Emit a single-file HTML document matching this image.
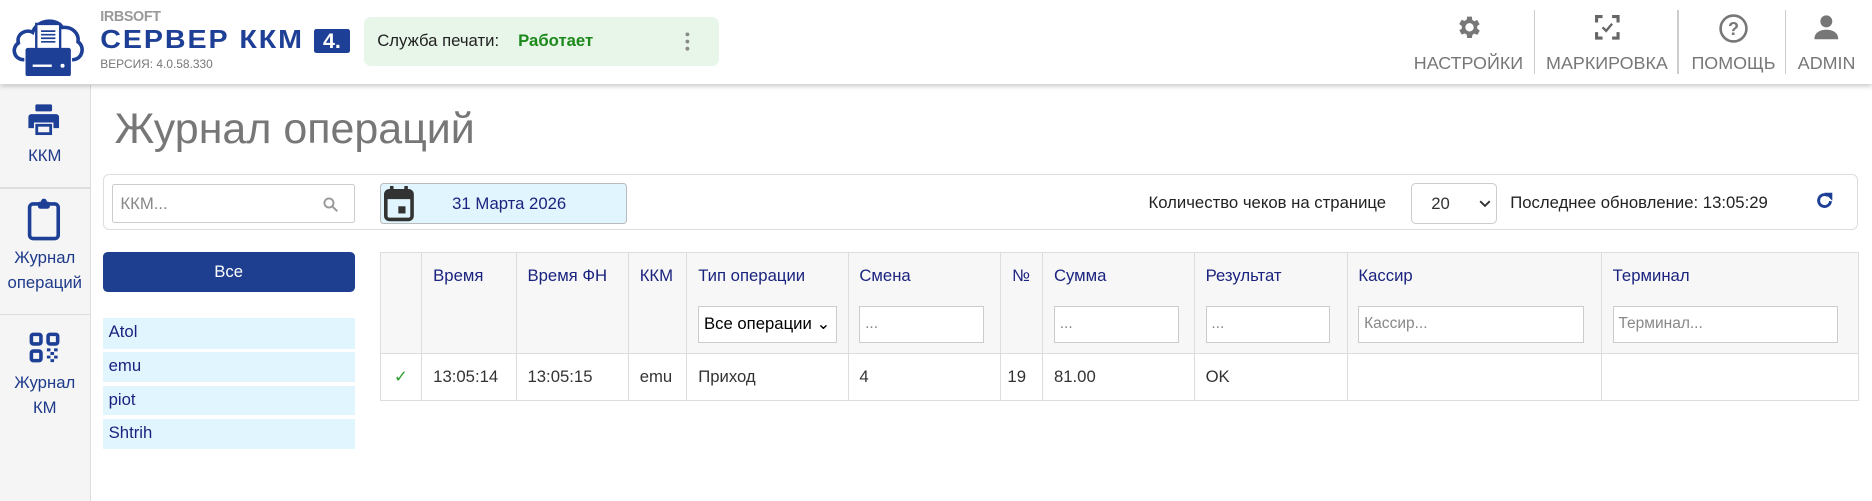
<!DOCTYPE html>
<html><head><meta charset="utf-8"><style>
html{zoom:1.19388}
body{margin:0;width:1568px;height:420px;overflow:hidden;background:#fff;font-family:"Liberation Sans",Arial,sans-serif;position:relative;color:#222}
.a{position:absolute}
.hdr{left:0;top:0;width:1568px;height:70px;background:#fff;box-shadow:0 2px 4px rgba(0,0,0,.22);z-index:2}
.nav{top:8px;height:56px;text-align:center;color:#777;font-size:15px}
.nav svg{margin-top:3px}
.nav .t{position:absolute;bottom:2px;left:0;right:0}
.sep{top:8px;width:1px;height:54px;background:#ccc}
.side{left:0;top:71px;width:75px;height:349px;background:#f5f5f5;border-right:1px solid #ddd}
.si{color:#1e3a8a;font-size:14px;text-align:center;width:75px;left:0;line-height:21px}
.hl{left:0;width:75px;height:1px;background:#ddd}
.inp{background:#fff;border:1px solid #ccc;border-radius:2px;box-sizing:border-box;font-size:13px;color:#888;padding-left:6px;line-height:29px}
.li{left:86px;width:211px;height:25px;background:#e1f5fe;color:#1a237e;font-size:14px;line-height:24px;padding-left:5px;box-sizing:border-box}
table{border-collapse:collapse;position:absolute;left:318px;top:211px;width:1239px;font-size:14px}
td,th{border:1px solid #ddd;padding:0 9px;text-align:left;font-weight:normal;vertical-align:top}
th{background:#f7f7f7;color:#1a237e;height:85px;padding-top:11px;box-sizing:border-box}
th .f{margin-top:17px;height:31px;background:#fff;border:1px solid #ccc;box-sizing:border-box;color:#888;font-size:13px;line-height:29px;padding-left:4px}
td{height:38px;line-height:38px;color:#333}
</style></head><body>
<div class="a hdr">
 <svg class="a" style="left:8px;top:10px" width="64" height="54" viewBox="0 0 64 54">
  <path d="M12 40 C3 40 1 30 7 26 C5 18 14 14 19 17 C22 7 38 4 44 13 C52 12 58 18 57 25 C63 29 61 40 52 40" fill="none" stroke="#1e3f96" stroke-width="3"/>
  <rect x="22" y="10" width="20" height="22" fill="#fff" stroke="#1e3f96" stroke-width="2"/>
  <path d="M26 16h12M26 19h12M26 22h12M26 25h12" stroke="#1e3f96" stroke-width="1.4"/>
  <rect x="13" y="30" width="38" height="24" rx="2" fill="#1e3f96"/>
  <rect x="19" y="44" width="16" height="2" fill="#fff"/><circle cx="44" cy="45" r="1.7" fill="#fff"/>
 </svg>
 <div class="a" style="left:84px;top:8px;font-size:12px;font-weight:bold;color:#999;letter-spacing:-.3px;line-height:12px">IRBSOFT</div>
 <div class="a" style="left:84px;top:20px;font-size:24px;font-weight:bold;color:#1e3f96;letter-spacing:1.6px;line-height:28px;transform:scaleY(.9);transform-origin:0 50%">СЕРВЕР ККМ</div>
 <div class="a" style="left:263px;top:24px;width:30px;height:20px;background:#1e3f96;color:#fff;font-weight:bold;font-size:18px;line-height:21px;text-align:center;border-radius:2px">4.</div>
 <div class="a" style="left:84px;top:48px;font-size:10px;color:#777">ВЕРСИЯ: 4.0.58.330</div>
 <div class="a" style="left:305px;top:14px;width:297px;height:41px;background:#e8f5e9;border-radius:6px;font-size:14px;line-height:41px">
  <span class="a" style="left:11px">Служба печати:</span>
  <span class="a" style="left:129px;color:#1b8a1b;font-weight:bold">Работает</span>
  <svg class="a" style="left:269px;top:13px" width="4" height="16" viewBox="0 0 4 16"><circle cx="2" cy="2" r="1.6" fill="#888"/><circle cx="2" cy="8" r="1.6" fill="#888"/><circle cx="2" cy="14" r="1.6" fill="#888"/></svg>
 </div>
 <div class="a nav" style="left:1180px;width:100px"><svg width="24" height="24" viewBox="0 0 24 24"><path fill="#777" d="M19.4 13a7.5 7.5 0 0 0 0-2l2.1-1.6-2-3.5-2.5 1a7 7 0 0 0-1.700-1L15 3h-4l-.4 2.7a7 7 0 0 0-1.7 1l-2.5-1-2 3.5L6.6 11a7.5 7.5 0 0 0 0 2l-2.1 1.6 2 3.5 2.5-1a7 7 0 0 0 1.7 1L11 21h4l.4-2.7a7 7 0 0 0 1.7-1l2.5 1 2-3.5zM13 15.5a3.5 3.5 0 1 1 0-7 3.5 3.5 0 0 1 0 7z"/></svg><div class="t">НАСТРОЙКИ</div></div>
 <div class="a sep" style="left:1285px"></div>
 <div class="a nav" style="left:1291px;width:110px"><svg width="24" height="24" viewBox="0 0 24 24" fill="none" stroke="#666" stroke-width="2.6"><path d="M3 8V3h5M16 3h5v5M21 16v5h-5M8 21H3v-5"/><path d="M8 12l3 3 5-6" stroke-width="2"/></svg><div class="t">МАРКИРОВКА</div></div>
 <div class="a sep" style="left:1405px"></div>
 <div class="a nav" style="left:1410px;width:84px"><svg width="26" height="26" viewBox="0 0 24 24"><circle cx="12" cy="12" r="10" fill="none" stroke="#777" stroke-width="2"/><text x="12" y="17" text-anchor="middle" font-size="14" font-weight="bold" fill="#777" font-family="Liberation Sans">?</text></svg><div class="t">ПОМОЩЬ</div></div>
 <div class="a sep" style="left:1495px"></div>
 <div class="a nav" style="left:1500px;width:60px"><svg width="24" height="24" viewBox="0 0 24 24"><circle cx="12" cy="7" r="5" fill="#777"/><path d="M2 22c0-6 5-8 10-8s10 2 10 8z" fill="#777"/></svg><div class="t">ADMIN</div></div>
</div>
<div class="a side"></div>
<svg class="a" style="left:23px;top:86px" width="28" height="28" viewBox="0 0 24 24"><rect x="6" y="1" width="12" height="5" rx="1" fill="#1e3f96"/><path d="M3 8h18a2 2 0 0 1 2 2v8h-4v-4H5v4H1v-8a2 2 0 0 1 2-2z" fill="#1e3f96"/><rect x="7" y="16" width="10" height="6" fill="none" stroke="#1e3f96" stroke-width="2"/></svg>
<div class="a si" style="top:120px">ККМ</div>
<div class="a hl" style="top:157px"></div>
<svg class="a" style="left:22px;top:166px" width="30" height="36" viewBox="0 0 30 36"><rect x="3" y="5" width="24" height="29" rx="3" fill="none" stroke="#1e3f96" stroke-width="3"/><rect x="10" y="3" width="10" height="6" rx="2" fill="#1e3f96"/><circle cx="15" cy="3" r="2.5" fill="#1e3f96"/></svg>
<div class="a si" style="top:205px">Журнал<br>операций</div>
<div class="a hl" style="top:263px"></div>
<svg class="a" style="left:24px;top:278px" width="26" height="26" viewBox="0 0 26 26" fill="none" stroke="#1e3f96" stroke-width="3"><rect x="2" y="2" width="8" height="8" rx="1.5"/><rect x="16" y="2" width="8" height="8" rx="1.5"/><rect x="2" y="16" width="8" height="8" rx="1.5"/><path d="M15 15h3M21 15h3M18 18h3M15 21h3M21 21h3M18 24h3" stroke-width="2.5"/></svg>
<div class="a si" style="top:310px">Журнал<br>КМ</div>
<div class="a" style="left:96px;top:88px;font-size:36px;color:#777">Журнал операций</div>
<div class="a" style="left:86px;top:146px;width:1470px;height:47px;border:1px solid #ddd;border-radius:5px;box-sizing:border-box"></div>
<div class="a inp" style="left:94px;top:154px;width:203px;height:33px;line-height:31px;font-size:14px">ККМ...<svg class="a" style="left:176px;top:10px" width="13" height="13" viewBox="0 0 13 13" fill="none" stroke="#999" stroke-width="1.6"><circle cx="5" cy="5" r="3.8"/><path d="M8 8l4 4"/></svg></div>
<div class="a" style="left:318px;top:153px;width:207px;height:35px;background:#e1f5fe;border:1px solid #bbb;border-radius:3px;box-sizing:border-box;color:#1a237e;font-size:14px;line-height:33px;text-align:center;padding-left:10px">31 Марта 2026</div>
<svg class="a" style="left:322px;top:156px" width="25" height="30" viewBox="0 0 25 30"><rect x="1.5" y="4" width="22" height="24" rx="3" fill="none" stroke="#333" stroke-width="3"/><rect x="1.5" y="4" width="22" height="7" fill="#333"/><rect x="5" y="0" width="3" height="6" fill="#333"/><rect x="17" y="0" width="3" height="6" fill="#333"/><rect x="12" y="17" width="6" height="6" fill="#333"/></svg>
<div class="a" style="left:962px;top:162px;font-size:14px">Количество чеков на странице</div>
<div class="a" style="left:1182px;top:153px;width:72px;height:35px;border:1px solid #ccc;border-radius:4px;box-sizing:border-box;font-size:14px;color:#333;line-height:33px;padding-left:16px">20<svg class="a" style="left:56px;top:14px" width="10" height="7" viewBox="0 0 10 7" fill="none" stroke="#333" stroke-width="1.6"><path d="M1 1l4 4 4-4"/></svg></div>
<div class="a" style="left:1265px;top:162px;font-size:14px">Последнее обновление: 13:05:29</div>
<svg class="a" style="left:1520px;top:160px" width="16" height="16" viewBox="0 0 16 16" fill="none" stroke="#1e3f96" stroke-width="2.4"><path d="M13 8.5A5 5 0 1 1 11 4"/><path d="M9 2h5v5z" fill="#1e3f96" stroke-width="1"/></svg>
<div class="a" style="left:86px;top:211px;width:211px;height:34px;background:#1e3f8f;border-radius:4px;color:#fff;font-size:14px;text-align:center;line-height:33px">Все</div>
<div class="a li" style="top:266px;height:26px">Atol</div>
<div class="a li" style="top:295px">emu</div>
<div class="a li" style="top:323px">piot</div>
<div class="a li" style="top:351px">Shtrih</div>
<table>
<tr><th style="width:35px"></th><th style="width:79px">Время</th><th style="width:94px">Время ФН</th><th style="width:49px">ККМ</th><th style="width:135px">Тип операции<div class="f" style="color:#000;font-size:14px">Все операции ⌄</div></th><th style="width:128px">Смена<div class="f" style="width:104px">...</div></th><th style="width:35px">№</th><th style="width:127px">Сумма<div class="f" style="width:105px">...</div></th><th style="width:128px">Результат<div class="f" style="width:104px">...</div></th><th style="width:213px">Кассир<div class="f" style="width:189px">Кассир...</div></th><th>Терминал<div class="f" style="width:189px">Терминал...</div></th></tr>
<tr><td style="color:#2e9e2e;text-align:center;padding:0">✓</td><td>13:05:14</td><td>13:05:15</td><td>emu</td><td>Приход</td><td>4</td><td style="padding:0 5px">19</td><td>81.00</td><td>OK</td><td></td><td></td></tr>
</table>
</body></html>
